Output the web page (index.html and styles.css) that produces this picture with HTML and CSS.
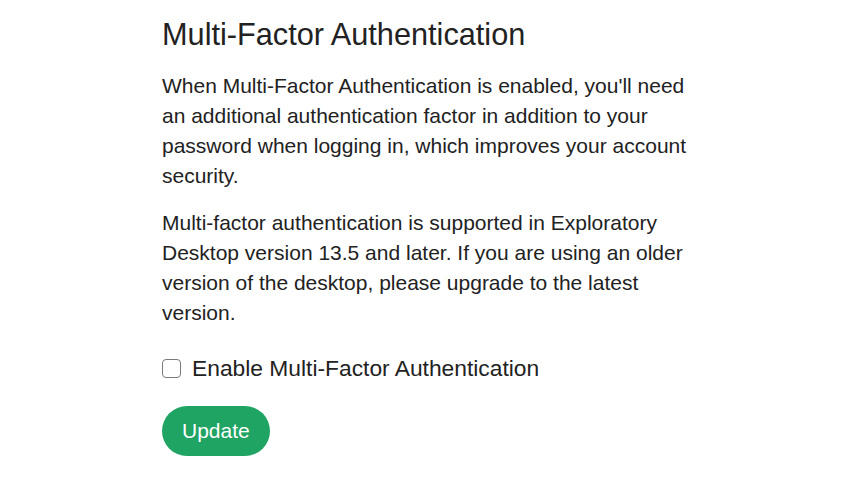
FILE: index.html
```html
<!DOCTYPE html>
<html lang="en">
<head>
    <meta charset="UTF-8">
    <meta name="viewport" content="width=device-width, initial-scale=1.0">
    <title>Multi-Factor Authentication</title>
    <link rel="stylesheet" href="styles.css">
</head>
<body>
    <div class="container">
        <h1>Multi-Factor Authentication</h1>

        <p>When Multi-Factor Authentication is enabled, you'll need an additional authentication factor in addition to your password when logging in, which improves your account security.</p>

        <p>Multi-factor authentication is supported in Exploratory Desktop version 13.5 and later. If you are using an older version of the desktop, please upgrade to the latest version.</p>

        <form class="mfa-form" onsubmit="return false;">
            <label class="check-row">
                <input type="checkbox" class="check-input">
                <span>Enable Multi-Factor Authentication</span>
            </label>

            <button type="submit" class="update-button">Update</button>
        </form>
    </div>
</body>
</html>
```

FILE: styles.css
```css
:root {
    --text-primary: #222222;
    --accent-color: #20a464;
    --checkbox-border: #7a7a7a;
}

* {
    margin: 0;
    padding: 0;
    box-sizing: border-box;
    font-family: 'Liberation Sans', Arial, Helvetica, sans-serif;
}

body {
    background: #ffffff;
    color: var(--text-primary);
}

.container {
    width: 536px;
    margin-left: 162px;
    padding-top: 16px;
}

h1 {
    font-size: 30.7px;
    font-weight: 400;
    line-height: 37px;
    margin-bottom: 18px;
}

p {
    font-size: 21px;
    line-height: 30px;
    margin-bottom: 17px;
}

.mfa-form {
    display: flex;
    flex-direction: column;
    align-items: flex-start;
    gap: 23px;
    padding-top: 8px;
}

.check-row {
    display: flex;
    align-items: center;
    gap: 11px;
    font-size: 22.8px;
    line-height: 30px;
    cursor: pointer;
}

.check-input {
    appearance: none;
    width: 19px;
    height: 19px;
    border: 1.5px solid var(--checkbox-border);
    border-radius: 4px;
    background: #ffffff;
    cursor: pointer;
}

.update-button {
    height: 50px;
    padding: 0 20px;
    font-size: 21px;
    color: #ffffff;
    background: var(--accent-color);
    border: none;
    border-radius: 25px;
    cursor: pointer;
}
```
